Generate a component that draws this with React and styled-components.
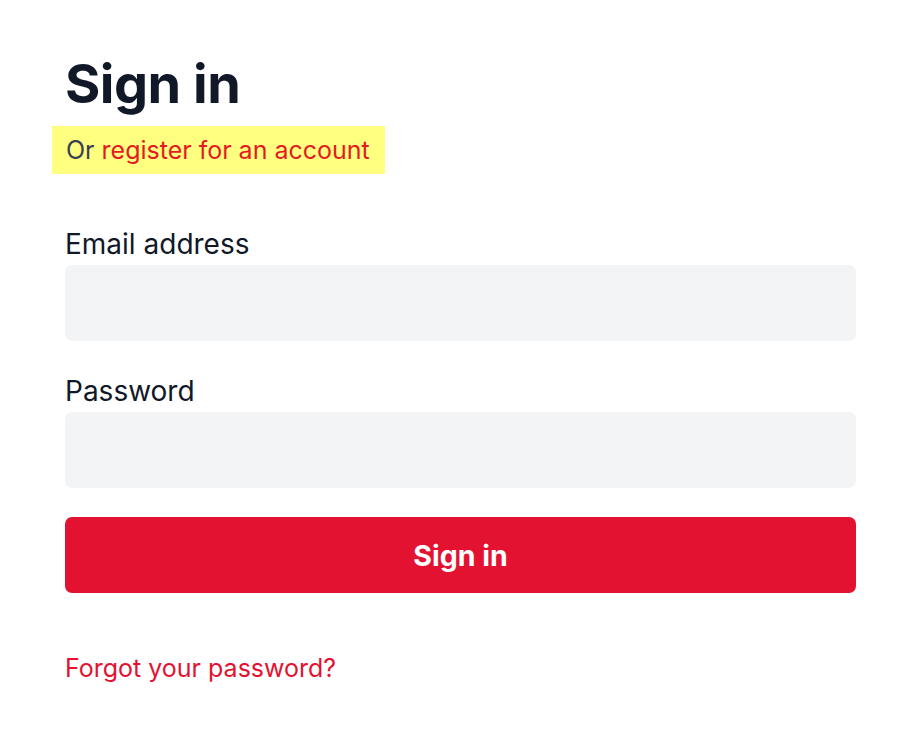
import React from "react";
import styled, { createGlobalStyle } from "styled-components";

const Global = createGlobalStyle`
  html, body { margin: 0; padding: 0; background: #ffffff; }
  body { font-family: Inter, "Noto Sans", sans-serif; -webkit-font-smoothing: antialiased; }
  * { box-sizing: border-box; }
`;

const Page = styled.main`
  padding: 52px 65px 40px 65px;
  width: 921px;
`;

const Title = styled.h1`
  margin: 0;
  font-size: 54px;
  line-height: 64px;
  font-weight: 700;
  color: #111827;
  letter-spacing: -0.5px;
`;

const Sub = styled.p`
  margin: 10px 0 0 -13px;
  display: inline-block;
  background: #ffff80;
  padding: 8px 15px 8px 14px;
  font-size: 25px;
  line-height: 32px;
  color: #374151;
`;

const Link = styled.a`
  color: ${(p) => p.$color || "#e31230"};
  text-decoration: none;
  font-size: 25px;
  line-height: 32px;
`;

const Form = styled.form`
  margin-top: 49px;
  display: flex;
  flex-direction: column;
`;

const Field = styled.div`
  display: flex;
  flex-direction: column;
  margin-bottom: 29px;
`;

const Label = styled.label`
  font-size: 28px;
  line-height: 36px;
  padding-top: 3px;
  color: #111827;
  margin-bottom: 3px;
`;

const Input = styled.input`
  height: 76px;
  width: 100%;
  border: none;
  border-radius: 7px;
  background: #f3f4f6;
  font-size: 24px;
  padding: 0 20px;
  outline: none;
`;

const Button = styled.button`
  height: 76px;
  width: 100%;
  border: none;
  border-radius: 7px;
  background: #e31230;
  color: #ffffff;
  font-family: Inter, "Noto Sans", sans-serif;
  font-size: 28.5px;
  font-weight: 700;
  cursor: pointer;
`;

const Footer = styled.div`
  margin-top: 59px;
`;

export default function App() {
  return (
    <>
      <Global />
      <Page>
        <Title>Sign in</Title>
        <Sub>
          Or <Link href="#" $color="#e31b23">register for an account</Link>
        </Sub>
        <Form onSubmit={(e) => e.preventDefault()}>
          <Field>
            <Label htmlFor="email">Email address</Label>
            <Input id="email" type="email" />
          </Field>
          <Field>
            <Label htmlFor="password">Password</Label>
            <Input id="password" type="password" />
          </Field>
          <Button type="submit">Sign in</Button>
        </Form>
        <Footer>
          <Link href="#">Forgot your password?</Link>
        </Footer>
      </Page>
    </>
  );
}
